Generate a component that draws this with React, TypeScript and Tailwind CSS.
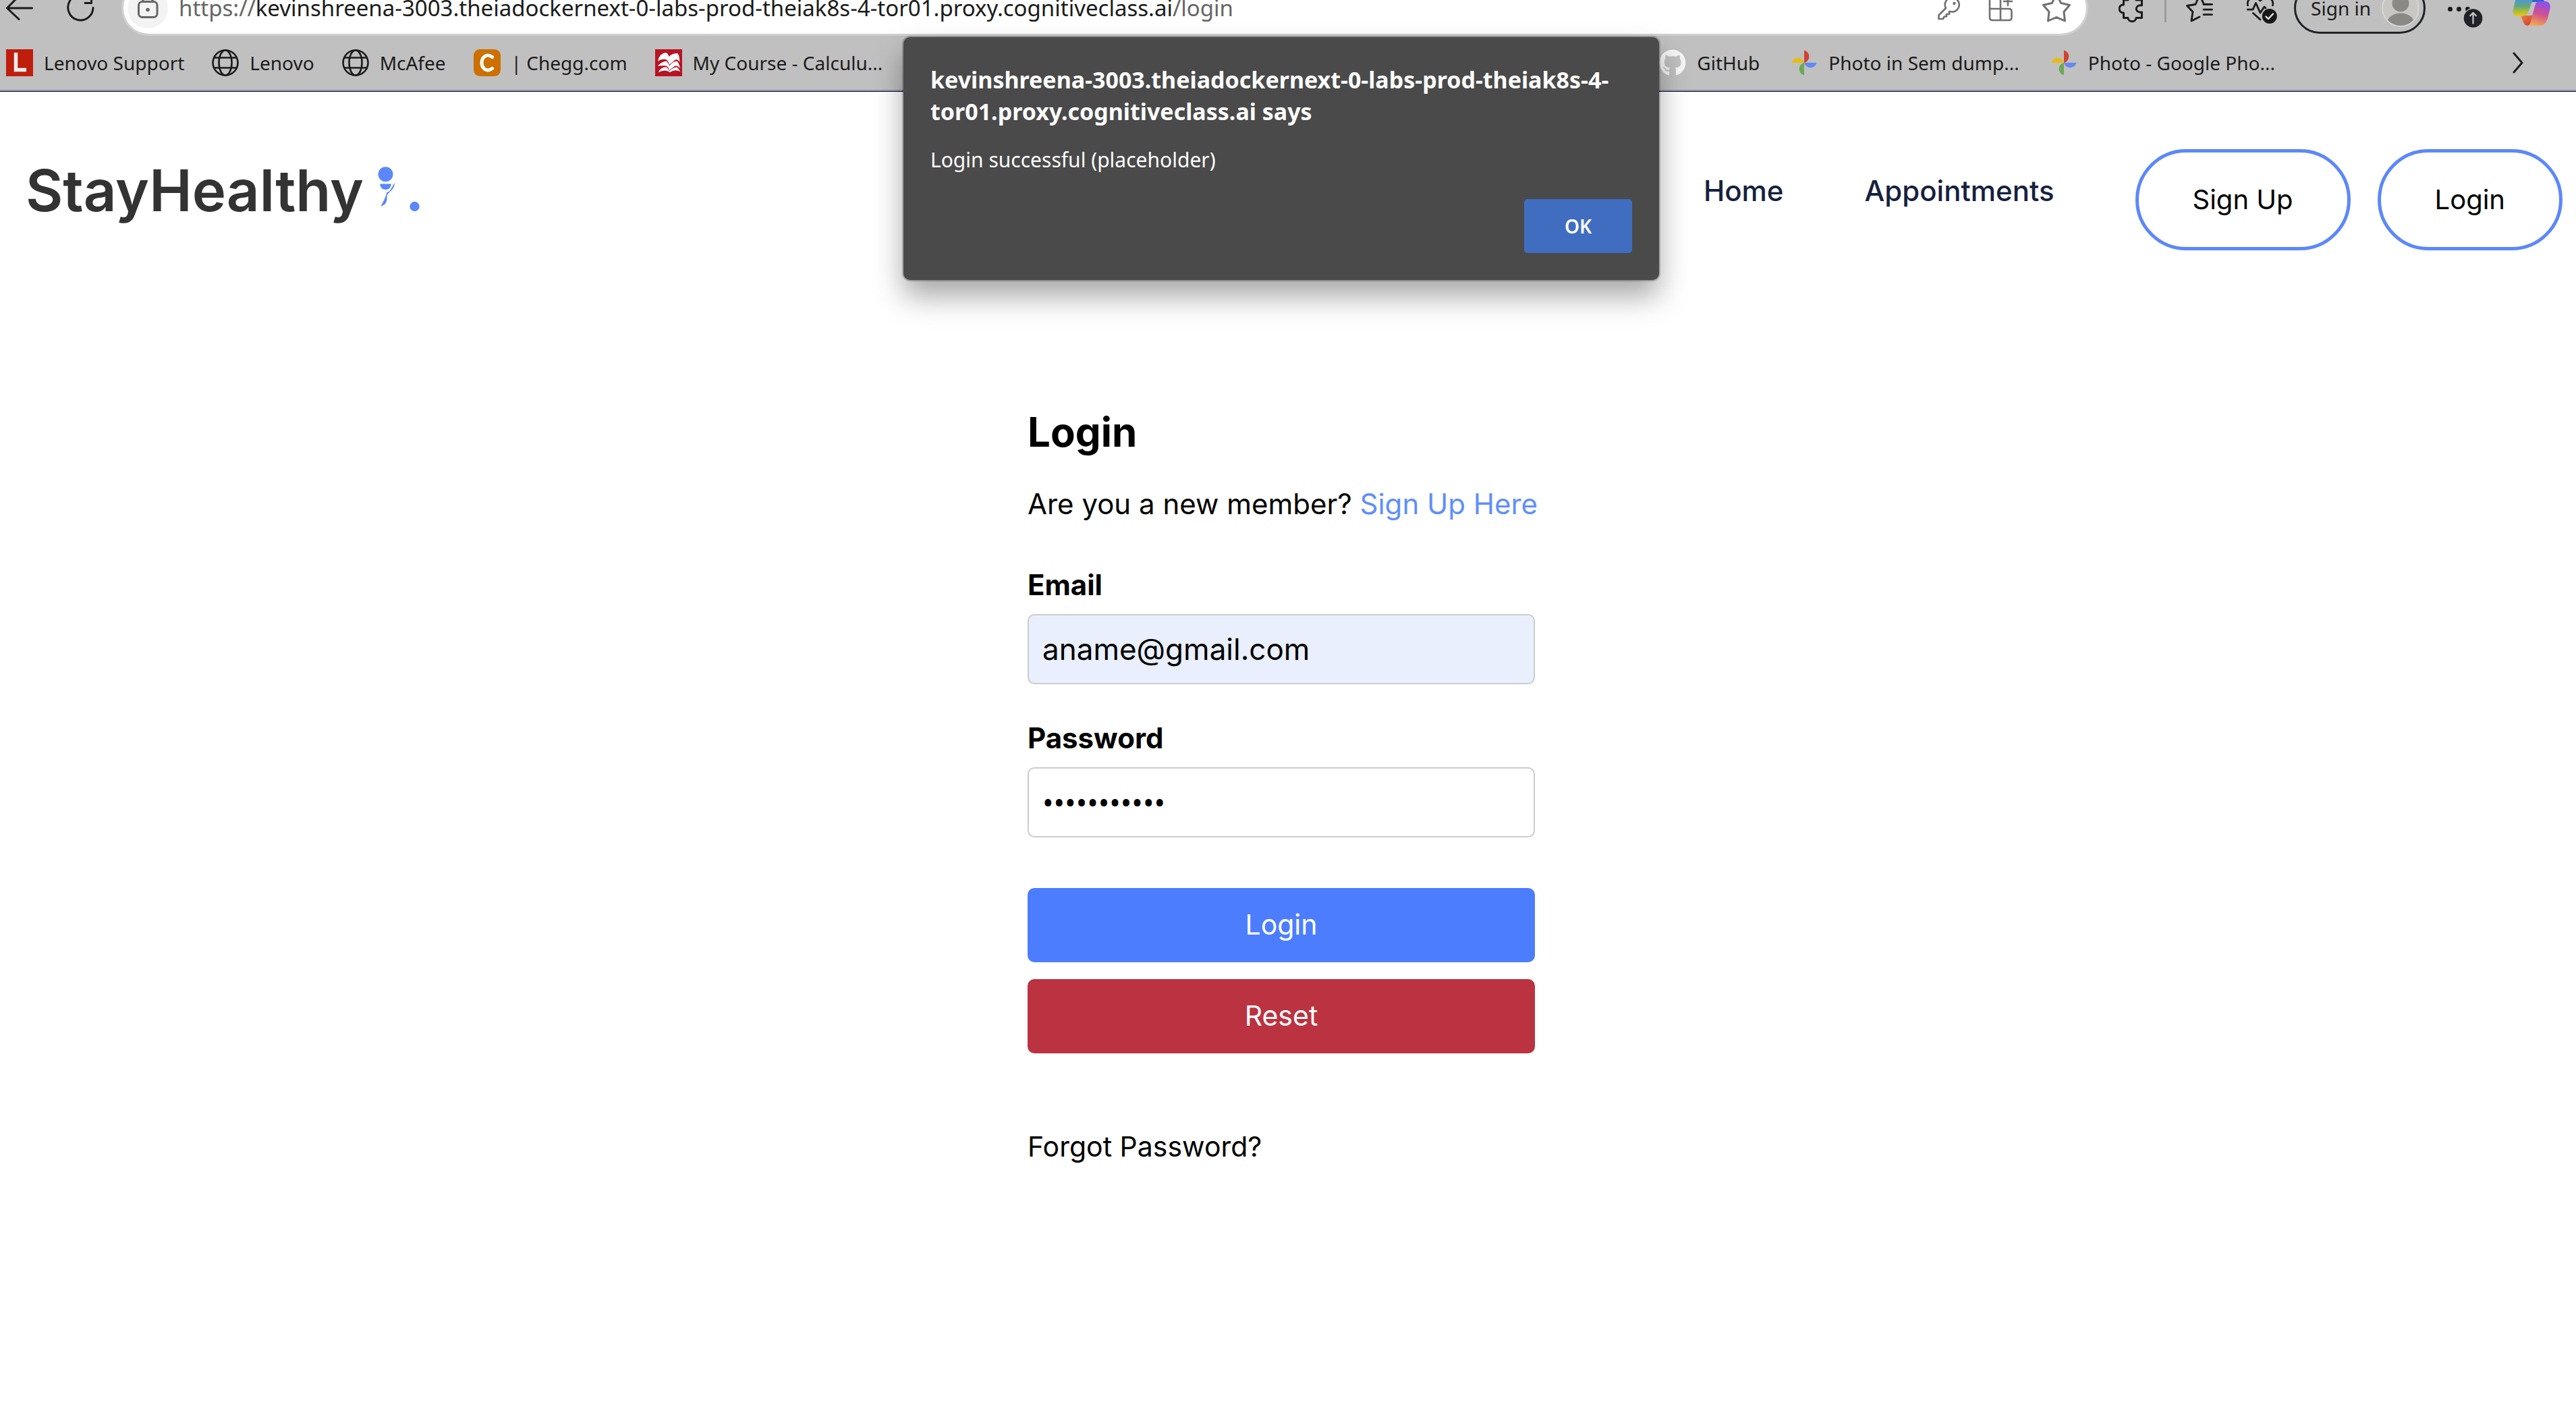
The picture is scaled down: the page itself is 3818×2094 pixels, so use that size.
import React from 'react';
import { FaGithub } from 'react-icons/fa6';

function BackIcon() {
  return (
    <svg className="h-[82px] w-10 shrink-0" viewBox="9 -29 40 82" fill="none" stroke="#1b1b1b" strokeWidth="3" strokeLinecap="round" strokeLinejoin="round">
      <path d="M47.500 12H11M28-6L10.500 12L28 28.500" />
    </svg>
  );
}

function RefreshIcon() {
  return (
    <svg className="h-[82px] w-[41px] shrink-0" viewBox="99 -29 41 82" fill="none" stroke="#1b1b1b" strokeWidth="3" strokeLinecap="round" strokeLinejoin="round">
      <path d="M138 11.500A18.600 19 0 1 1 133-2" />
      <path d="M126 4.500H135.500V-8" />
    </svg>
  );
}

function LockIcon() {
  return (
    <svg className="h-[60px] w-[60px]" viewBox="189 -17 60 60" fill="none" stroke="#666" strokeWidth="3">
      <rect x="205.500" y="3.500" width="27.500" height="23" rx="5.500" />
      <path d="M212 3V-1A7 7 0 0 1 226-1V3" />
      <circle cx="219" cy="15.500" r="2.800" fill="#666" stroke="none" />
    </svg>
  );
}

function KeyIcon() {
  return (
    <svg className="h-[82px] w-[34px]" viewBox="2872 -29 34 82" fill="none" stroke="#707070" strokeWidth="2.600" strokeLinejoin="round">
      <path d="M2885 12A10.500 10.500 0 1 1 2893.500 17.500L2890 17V21H2886V24.500H2882.500L2881 28H2874.500V22.500Z" />
      <circle cx="2897.500" cy="5" r="2.200" fill="#707070" stroke="none" />
    </svg>
  );
}

function AppsIcon() {
  return (
    <svg className="h-[82px] w-[38px]" viewBox="2951 -29 38 82" fill="none" stroke="#707070" strokeWidth="2.600" strokeLinecap="round">
      <path d="M2969-5V30M2969-5H2957Q2953-5 2953-1V26Q2953 30 2957 30H2981Q2985.500 30 2985.500 26V17Q2985.500 13 2981.500 13H2953" />
      <path d="M2974 2H2986M2980-4V8" />
    </svg>
  );
}

function StarIcon() {
  return (
    <svg className="h-[82px] w-[42px]" viewBox="3028 -29 42 82" fill="none" stroke="#707070" strokeWidth="3" strokeLinejoin="round">
      <path d="M3049-10L3055.500 4.500L3068.500 7.500L3060 17.500L3061.500 31L3049 25.500L3036.500 31L3038 17.500L3029.500 7.500L3042.500 4.500Z" />
    </svg>
  );
}

function PuzzleIcon() {
  return (
    <svg className="h-[82px] w-[36px] shrink-0" viewBox="3139 -29 36 82" fill="none" stroke="#1b1b1b" strokeWidth="3" strokeLinejoin="round">
      <path d="M3153 0C3152-8 3166-8 3165 0H3173.500V8C3162.500 6.500 3162.500 19.500 3173.500 18V26.500H3165C3165 33.500 3153 33.500 3153 26.500H3146.500V19C3138 19.500 3138 6.500 3146.500 7V0Z" />
    </svg>
  );
}

function FavoritesIcon() {
  return (
    <svg className="h-[82px] w-10 shrink-0" viewBox="3239 -29 40 82" fill="none" stroke="#1b1b1b" strokeWidth="2.800" strokeLinecap="round" strokeLinejoin="round">
      <path d="M3259 25L3247 31L3249 17.500L3240.500 8.500L3253 6.500L3259-7L3265 5" />
      <path d="M3265 6.500H3277.500M3265 14.200H3277.500M3265 21.700H3277.500" />
    </svg>
  );
}

function HealthIcon() {
  return (
    <svg className="h-[82px] w-[45px] shrink-0" viewBox="3329 -29 45 82" fill="none" stroke="#1b1b1b" strokeWidth="2.800" strokeLinecap="round" strokeLinejoin="round">
      <path d="M3330.500 8C3328-2 3340-8 3349 1C3358-8 3370-2 3367.500 8" />
      <path d="M3330 14.200H3338L3342.500 4.500L3349 19L3355 10L3357 12" />
      <path d="M3338.500 19.500L3349 29" />
      <circle cx="3362.800" cy="24" r="11" fill="#181818" stroke="none" />
      <path d="M3357.500 24.500L3361 28L3368 20.500" stroke="#e8e8e8" strokeWidth="2.400" />
    </svg>
  );
}

function AvatarIcon() {
  return (
    <svg className="h-14 w-14" viewBox="0 0 56 56">
      <defs>
        <clipPath id="avatar-clip"><circle cx="28" cy="28" r="26" /></clipPath>
      </defs>
      <circle cx="28" cy="28" r="27" fill="#c8c7c4" stroke="#dddcd9" strokeWidth="1.500" />
      <g clipPath="url(#avatar-clip)" fill="#8a8986">
        <circle cx="28" cy="21" r="12.500" />
        <path d="M5 56C7 42 17 35.500 28 35.500S49 42 51 56Z" />
      </g>
    </svg>
  );
}

function MoreIcon() {
  return (
    <svg className="h-[82px] w-[52px]" viewBox="3628 -29 52 82">
      <g fill="#1b1b1b">
        <circle cx="3631.500" cy="13.500" r="3.500" />
        <circle cx="3644.500" cy="13.500" r="3.500" />
        <circle cx="3657.500" cy="13.500" r="3.500" />
      </g>
      <circle cx="3665.500" cy="27" r="15" fill="#c0c0c0" />
      <circle cx="3665.500" cy="27" r="13.800" fill="#1f2226" />
      <path d="M3665.500 35.500V19.500M3660.500 24L3665.500 19L3670.500 24" fill="none" stroke="#c8c8c8" strokeWidth="2.200" />
    </svg>
  );
}

function CopilotIcon() {
  return (
    <svg className="h-[82px] w-[56px]" viewBox="3724 -29 56 82">
      <defs>
        <linearGradient id="cp-left" x1="0" y1="0" x2="0" y2="1">
          <stop offset="0.300" stopColor="#4f93e8" />
          <stop offset="0.600" stopColor="#62a87c" />
          <stop offset="0.800" stopColor="#a8bd3c" />
          <stop offset="1" stopColor="#ecc414" />
        </linearGradient>
        <linearGradient id="cp-right" x1="0.600" y1="0" x2="0.350" y2="1">
          <stop offset="0" stopColor="#8a4ff0" />
          <stop offset="0.500" stopColor="#d2508f" />
          <stop offset="1" stopColor="#f2a850" />
        </linearGradient>
        <linearGradient id="cp-fold" x1="0" y1="0" x2="1" y2="1">
          <stop offset="0" stopColor="#ee7f3c" />
          <stop offset="1" stopColor="#c83a34" />
        </linearGradient>
      </defs>
      <path d="M3748-13H3762Q3767-13 3769-5L3771 3H3750Z" fill="#2b62d8" />
      <path d="M3736 23H3754L3750 38H3746Q3742 38 3740 33Z" fill="url(#cp-fold)" />
      <path d="M3738-13H3758L3748 16Q3745 24 3737 24H3731Q3723 24 3725 14L3729-4Q3731-13 3738-13Z" fill="url(#cp-left)" />
      <path d="M3762 2H3773Q3781 3 3779.500 13L3776 27Q3773 38 3765 38H3746Q3750 37 3751 31L3757 9Q3759 2 3762 2Z" fill="url(#cp-right)" />
    </svg>
  );
}

function LenovoIcon() {
  return (
    <svg className="h-10 w-10" viewBox="0 0 40 40">
      <rect width="40" height="40" fill="#c01e0c" />
      <path d="M14.500 5V30.500H30" fill="none" stroke="#f5f0ef" strokeWidth="5.500" />
    </svg>
  );
}

function GlobeIcon() {
  return (
    <svg className="h-10 w-10" viewBox="0 0 40 40" fill="none" stroke="#1b1b1b" strokeWidth="2.600">
      <circle cx="20" cy="20" r="18.500" />
      <ellipse cx="20" cy="20" rx="9.500" ry="18.500" />
      <path d="M3 12.500H37M3 27.500H37" />
    </svg>
  );
}

function CheggIcon() {
  return (
    <svg className="h-10 w-10" viewBox="0 0 40 40">
      <rect width="40" height="40" rx="9" fill="#cd7000" />
      <path d="M27.500 11.500C19 5.500 12 12 12 20S19 34.500 27.500 28.500" fill="none" stroke="#fff" strokeWidth="5" strokeLinecap="round" />
    </svg>
  );
}

function MacmillanIcon() {
  return (
    <svg className="h-10 w-10" viewBox="0 0 40 40">
      <rect width="40" height="40" fill="#b81424" />
      <g fill="#fff">
        <path d="M4 18Q6 6 16 5Q19 6 20.500 11Q25 6 33 6Q36 8 36.500 19Q33 14 30 15.500L21 23Q19 16 16 15Q9 14 4 18Z" />
        <path d="M4 25Q9 18 17 17.500L21.500 24.500Q26 18 32 17.500Q35 19 37 28Q32 23 29 25L21 31Q19 25 16 24.500Q9 24 4 25Z" />
        <path d="M5 34Q8 26 17 26.500L21.500 32Q26 27 32 26.500Q35 28 37 33Q30 29 22 34Q15 29 5 34Z" />
      </g>
    </svg>
  );
}

function PhotosIcon() {
  return (
    <svg className="h-10 w-10" viewBox="0 0 40 40">
      <path d="M20 1.500A9.500 9.500 0 0 1 20 20Z" fill="#d04432" />
      <path d="M38.500 20A9.500 9.500 0 0 1 20 20Z" fill="#6288f4" />
      <path d="M20 38.500A9.500 9.500 0 0 1 20 20Z" fill="#6ba959" />
      <path d="M1.500 20A9.500 9.500 0 0 1 20 20Z" fill="#e8bb12" />
    </svg>
  );
}

function Bookmark({ icon, label }: { icon: React.ReactNode; label: string }) {
  return (
    <a href="#" className="flex items-center gap-4 whitespace-nowrap">
      {icon}
      {label}
    </a>
  );
}

function BrowserBar() {
  return (
    <div className="overflow-hidden border-b border-[#000060] bg-[#c0c0c0] font-['Noto_Sans',sans-serif] text-[28px] text-[#1b1b1b]">
      <div className="-mt-[29px] flex h-[82px] items-center pr-[38px] pl-[9px]">
        <button aria-label="Back"><BackIcon /></button>
        <button aria-label="Refresh" className="ml-[50px]"><RefreshIcon /></button>
        <div className="ml-10 flex h-[82px] min-w-0 flex-1 items-center rounded-full border-[3px] border-[#d0d0d0] bg-white pr-[23px] pl-[6px]">
          <button aria-label="Site information" className="shrink-0 rounded-full bg-[#f3f3f3]"><LockIcon /></button>
          <label className="ml-4 flex flex-1 text-[33px] text-[#666]">
            <span>https://</span>
            <input
              aria-label="Address"
              className="field-sizing-content text-[#1b1b1b] outline-none"
              defaultValue="kevinshreena-3003.theiadockernext-0-labs-prod-theiak8s-4-tor01.proxy.cognitiveclass.ai"
            />
            <span>/login</span>
          </label>
          <div className="flex items-center gap-[42px]">
            <button aria-label="Passwords"><KeyIcon /></button>
            <button aria-label="Apps"><AppsIcon /></button>
            <button aria-label="Add to favorites"><StarIcon /></button>
          </div>
        </div>
        <button aria-label="Extensions" className="ml-[45px]"><PuzzleIcon /></button>
        <div className="ml-8 h-[42px] w-[3px] bg-[#9c9c9c]" />
        <button aria-label="Favorites" className="ml-[29px]"><FavoritesIcon /></button>
        <button aria-label="Browser essentials" className="ml-[50px]"><HealthIcon /></button>
        <button className="ml-[25px] flex h-[76px] items-center gap-4 rounded-full border-[3px] border-[#1f2226] pr-[6px] pl-[22px] whitespace-nowrap">
          Sign in
          <AvatarIcon />
        </button>
        <button aria-label="Settings and more" className="ml-[33px]"><MoreIcon /></button>
        <button aria-label="Copilot" className="ml-11"><CopilotIcon /></button>
      </div>
      <nav aria-label="Bookmarks" className="flex h-[82px] items-center justify-between border-b-2 border-[#9b9b9b] pr-[78px] pl-[9px]">
        <div className="flex gap-[41px]">
          <Bookmark icon={<LenovoIcon />} label="Lenovo Support" />
          <Bookmark icon={<GlobeIcon />} label="Lenovo" />
          <Bookmark icon={<GlobeIcon />} label="McAfee" />
          <Bookmark icon={<CheggIcon />} label="| Chegg.com" />
          <Bookmark icon={<MacmillanIcon />} label="My Course - Calculu..." />
        </div>
        <div className="flex items-center gap-[46px]">
          <Bookmark icon={<FaGithub className="h-10 w-10 text-[#f5f5f5]" />} label="GitHub" />
          <Bookmark icon={<PhotosIcon />} label="Photo in Sem dump..." />
          <Bookmark icon={<PhotosIcon />} label="Photo - Google Pho..." />
          <button aria-label="More bookmarks" className="ml-[306px]">
            <svg className="h-8 w-4" viewBox="0 0 16 32" fill="none" stroke="#1b1b1b" strokeWidth="3" strokeLinecap="round" strokeLinejoin="round">
              <path d="M2 2L14 16L2 30" />
            </svg>
          </button>
        </div>
      </nav>
    </div>
  );
}

function LoginAlert() {
  return (
    <div className="absolute inset-x-0 top-[55px] flex justify-center pr-5">
      <div
        role="alertdialog"
        aria-labelledby="alert-title"
        aria-describedby="alert-text"
        className="w-[1120px] rounded-[10px] bg-[#4a4a4a] px-10 pt-10 pb-10 font-['Noto_Sans',sans-serif] text-white shadow-[0_0_0_2px_rgba(0,0,0,0.2),0_24px_44px_rgba(0,0,0,0.35)]"
      >
        <h1 id="alert-title" className="text-[34px] leading-[47px] font-bold">
          kevinshreena-3003.theiadockernext-0-labs-prod-theiak8s-4-tor01.proxy.cognitiveclass.ai says
        </h1>
        <p id="alert-text" className="mt-6 text-[30px] leading-[48px]">Login successful (placeholder)</p>
        <div className="mt-[34px] flex justify-end">
          <button className="h-20 w-40 rounded-[5px] bg-[#406dc0] text-[28px] font-semibold">OK</button>
        </div>
      </div>
    </div>
  );
}

function LogoMark() {
  return (
    <svg className="h-[120px] w-[70px]" viewBox="555 221 70 120" fill="#5c87fc">
      <circle cx="569.500" cy="258.300" r="11" />
      <path d="M561 272.500H578Q577 281 569.500 281T561 272.500Z" />
      <path d="M583 270.500Q583 279 575.500 284.500L571.500 287V285L575 283.500Q579 278 583 270.500Z" />
      <path d="M571.500 285H575L571.500 289.500V296Q570 304.500 562 305.500Q567 299 571.500 285Z" />
      <circle cx="612.500" cy="306" r="7.200" />
    </svg>
  );
}

function SiteHeader() {
  return (
    <header className="flex items-start justify-between">
      <a href="#" className="flex gap-[18px] pl-[38px] text-[85px] leading-[124px] font-semibold text-[#333]">
        StayHealthy
        <LogoMark />
      </a>
      <div className="flex items-start gap-[120px]">
        <nav className="flex gap-[120px] text-[42px] leading-[124px] font-medium text-[#16213e]">
          <a href="#">Home</a>
          <a href="#">Appointments</a>
        </nav>
        <div className="flex gap-10 text-[40px]">
          <button className="h-[150px] rounded-full border-[5px] border-[#5c87fc] px-20">Sign Up</button>
          <button className="h-[150px] rounded-full border-[5px] border-[#5c87fc] px-20">Login</button>
        </div>
      </div>
    </header>
  );
}

function LoginForm() {
  return (
    <form className="mx-auto w-[752px]" onSubmit={(e) => e.preventDefault()}>
      <h2 className="text-[60px] leading-[90px] font-bold">Login</h2>
      <p className="mt-8 text-[42px] leading-[60px] whitespace-nowrap">
        Are you a new member? <a href="#" className="text-[#5f8ffc]">Sign Up Here</a>
      </p>
      <label htmlFor="email" className="mt-[60px] block text-[42px] leading-[60px] font-bold">Email</label>
      <input
        id="email"
        type="email"
        defaultValue="aname@gmail.com"
        className="mt-[13px] h-[104px] w-full rounded-[10px] border-2 border-[#ccc] bg-[#e9effd] px-5 text-[44px]"
      />
      <label htmlFor="password" className="mt-[50px] block text-[42px] leading-[60px] font-bold">Password</label>
      <input
        id="password"
        type="password"
        defaultValue="placeholder"
        className="mt-[13px] h-[104px] w-full rounded-[10px] border-2 border-[#ccc] bg-white px-5 font-['Noto_Sans',sans-serif] text-[44px]"
      />
      <div className="mt-[75px] flex flex-col gap-[25px] text-white">
        <button type="submit" className="h-[110px] rounded-[10px] bg-[#4c7dff]">Login</button>
        <button type="reset" className="h-[110px] rounded-[10px] bg-[#bb3240]">Reset</button>
      </div>
      <a href="#" className="mt-[108px] block leading-[60px]">Forgot Password?</a>
    </form>
  );
}

export default function App() {
  return (
    <div className="relative min-h-screen bg-white">
      <BrowserBar />
      <main className="flex flex-col gap-56 pt-[85px] pr-5 font-['Inter',sans-serif] text-[41px] text-black">
        <SiteHeader />
        <LoginForm />
      </main>
      <LoginAlert />
    </div>
  );
}
